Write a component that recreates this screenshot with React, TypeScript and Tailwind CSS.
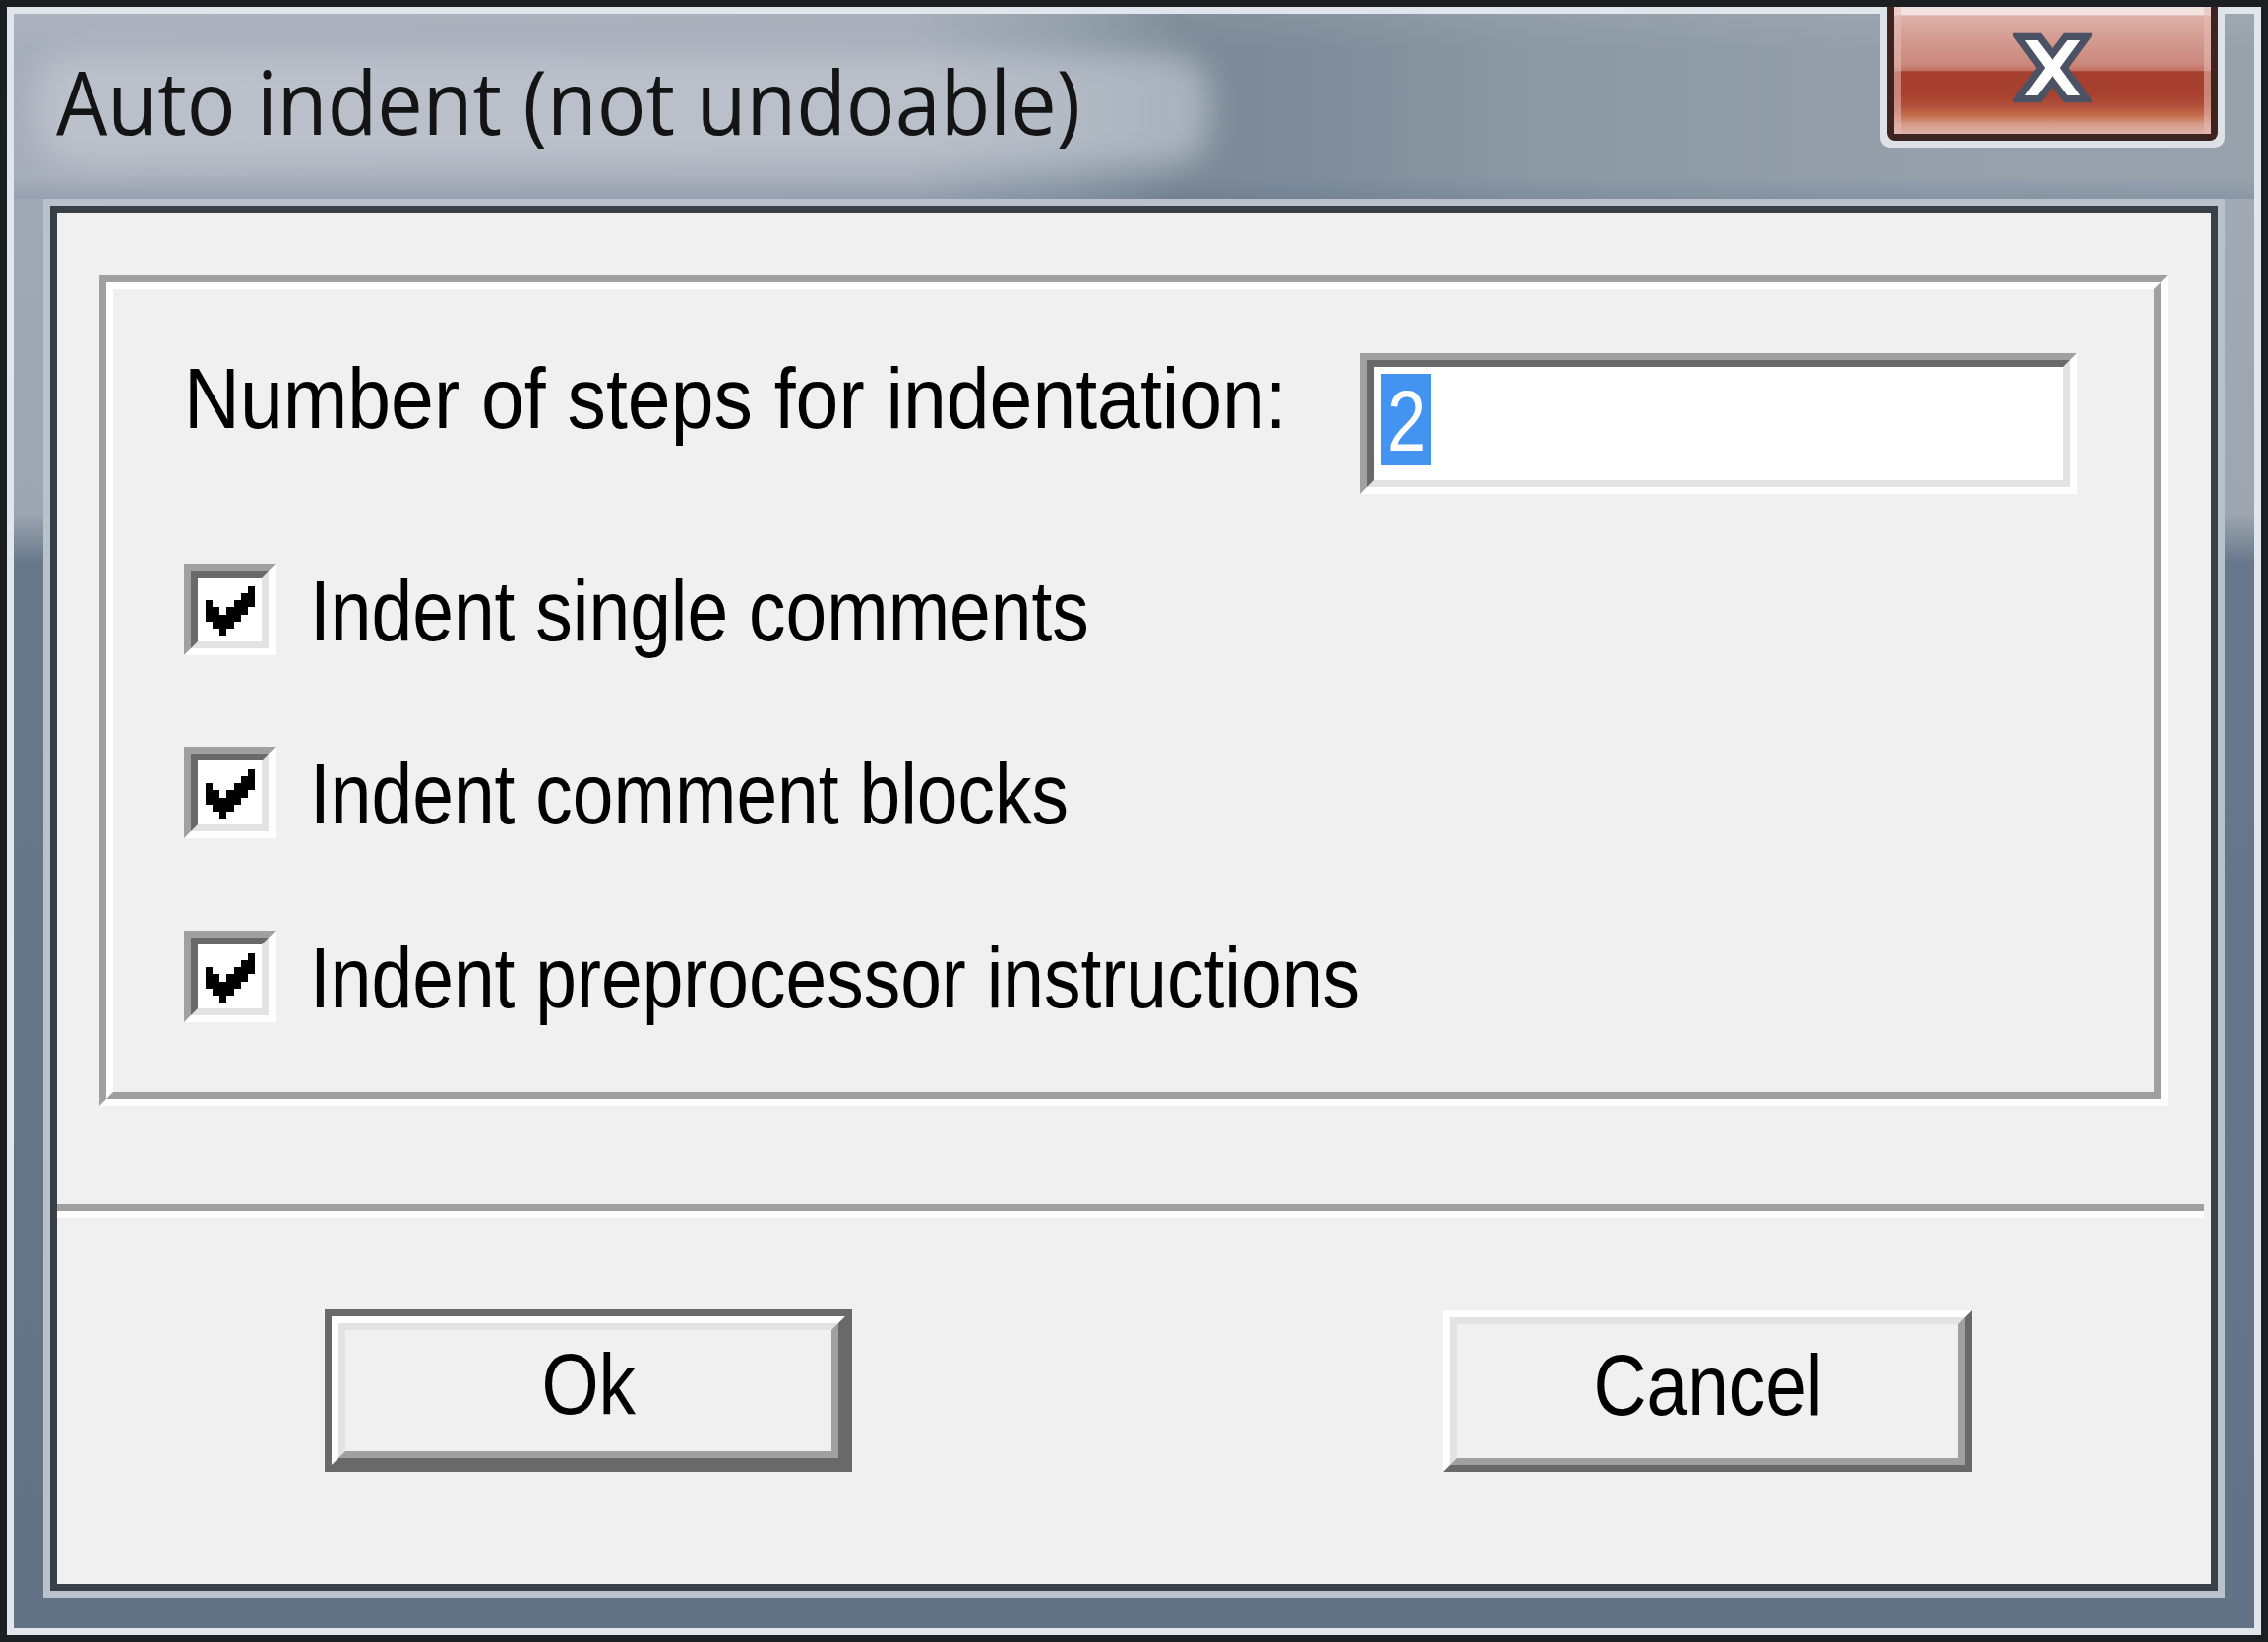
import React from "react";

const CHECK_CELLS: [number, number][] = [
  [6, 0], [5, 1], [6, 1], [0, 2], [4, 2], [5, 2], [6, 2],
  [0, 3], [1, 3], [3, 3], [4, 3], [5, 3],
  [0, 4], [1, 4], [2, 4], [3, 4], [4, 4],
  [1, 5], [2, 5], [3, 5], [2, 6],
];

function CheckMark() {
  return (
    <svg width="50" height="50" viewBox="0 0 7 7" shapeRendering="crispEdges">
      {CHECK_CELLS.map(([x, y]) => (
        <rect key={`${x}-${y}`} x={x} y={y} width="1" height="1" fill="#000" />
      ))}
    </svg>
  );
}

function Checkbox() {
  return (
    <div className="w-[93px] h-[93px] shrink-0 border-t-[7px] border-l-[7px] border-t-[#a0a0a0] border-l-[#a0a0a0] border-b-[7px] border-r-[7px] border-b-white border-r-white">
      <div className="w-full h-full border-t-[7px] border-l-[7px] border-t-[#696969] border-l-[#696969] border-b-[7px] border-r-[7px] border-b-[#e3e3e3] border-r-[#e3e3e3] bg-white flex items-center justify-center pt-[2px]">
        <CheckMark />
      </div>
    </div>
  );
}

function Label({ text, wide }: { text: string; wide?: boolean }) {
  return (
    <span
      className={
        "inline-block whitespace-nowrap origin-left font-['Liberation_Sans',Arial,sans-serif] text-[88px] leading-none text-black " +
        (wide ? "scale-x-[0.895]" : "scale-x-[0.852]")
      }
    >
      {text}
    </span>
  );
}

function CheckRow({ text, mt }: { text: string; mt: string }) {
  return (
    <div className={"flex items-start gap-[35px] " + mt}>
      <Checkbox />
      <div className="mt-[4px]">
        <Label text={text} />
      </div>
    </div>
  );
}

function CloseGlyph() {
  return (
    <svg width="80" height="72" viewBox="0 0 11 10" className="block">
      <polygon
        points="0.6,0.6 3.6,0.6 5.5,3.1 7.4,0.6 10.4,0.6 7.2,5 10.4,9.4 7.4,9.4 5.5,6.9 3.6,9.4 0.6,9.4 3.8,5"
        fill="#ffffff"
        stroke="#4a5263"
        strokeWidth="1"
        strokeLinejoin="miter"
      />
    </svg>
  );
}

function CloseButton() {
  return (
    <div className="absolute left-[1911px] top-[7px] w-[350px] h-[143px] bg-[#dde2e8] rounded-b-[10px] px-[7px] pb-[7px]">
      <div className="w-full h-full border-x-[7px] border-b-[7px] border-[#3e2420] rounded-b-[8px] overflow-hidden">
        <div className="w-full h-full flex items-center justify-center pb-[6px] bg-[linear-gradient(to_bottom,#f2e2e0_0%,#f2e2e0_6%,#ddb0a8_7%,#d49c92_25%,#cb887c_45%,#c27466_50%,#a53f2e_51%,#a7402f_68%,#b24f3a_78%,#c6704f_86%,#d49a88_92%,#dfb2a8_100%)] shadow-[inset_7px_0_0_rgba(230,190,182,0.55),inset_-7px_0_0_rgba(230,190,182,0.55)]">
          <CloseGlyph />
        </div>
      </div>
    </div>
  );
}

function Button({ text, isDefault }: { text: string; isDefault?: boolean }) {
  const inner = (
    <div className="w-full h-full border-t-[7px] border-l-[7px] border-t-white border-l-white border-b-[7px] border-r-[7px] border-b-[#696969] border-r-[#696969]">
      <div className="w-full h-full border-t-[7px] border-l-[7px] border-t-[#e3e3e3] border-l-[#e3e3e3] border-b-[7px] border-r-[7px] border-b-[#a0a0a0] border-r-[#a0a0a0] bg-[#f0f0f0] flex items-center justify-center pb-[13px]">
        <span className="inline-block whitespace-nowrap origin-center scale-x-[0.85] font-['Liberation_Sans',Arial,sans-serif] text-[88px] leading-none text-black">
          {text}
        </span>
      </div>
    </div>
  );
  if (isDefault) {
    return (
      <div className="w-[536px] h-[165px] border-[7px] border-[#696969] shrink-0">{inner}</div>
    );
  }
  return <div className="w-[537px] h-[164px] mt-[1px] shrink-0">{inner}</div>;
}

export default function App() {
  return (
    <div className="relative w-[2305px] h-[1669px] bg-[#1c1f22] p-[7px] overflow-hidden">
      <div className="h-full bg-[#e1e6ec] p-[7px]">
        <div className="h-full flex flex-col bg-[linear-gradient(to_bottom,#a4acb6_0%,#9ca5b0_31%,#67788b_34%,#627386_100%)]">
          {/* Title bar */}
          <div className="h-[188px] shrink-0 relative bg-[linear-gradient(to_right,#a6aeb9_0%,#a4acb7_40%,#909ca8_47%,#7b8996_52%,#7f8d9a_58%,#8c98a4_68%,#95a0ab_85%,#98a2ad_100%)]">
            <div className="absolute inset-0 bg-[linear-gradient(to_bottom,rgba(255,255,255,0.06)_0%,rgba(255,255,255,0)_20%,rgba(0,0,0,0)_88%,rgba(40,60,110,0.12)_100%)]" />
            <div className="relative pl-[43px] pt-[43px] h-full">
              <div className="relative inline-block">
                <div className="absolute left-[-20px] right-[-40px] top-[-4px] bottom-[-22px] bg-[#c9ced7] opacity-60 blur-[16px] rounded-[40px]" />
                <span className="relative inline-block whitespace-nowrap origin-left scale-x-[0.92] font-['Open_Sans',sans-serif] text-[90px] leading-none text-[#141414]">
                  Auto indent (not undoable)
                </span>
              </div>
            </div>
          </div>

          {/* Client area */}
          <div className="flex-1 px-[30px] pb-[31px]">
            <div className="h-full border-[7px] border-[#b9c2ca]">
              <div className="h-full border-[7px] border-[#394048] bg-[#f0f0f0] flex flex-col pt-[64px]">
                {/* Group box */}
                <div className="ml-[43px] mr-[44px] h-[844px] shrink-0 border-t-[7px] border-l-[7px] border-t-[#a0a0a0] border-l-[#a0a0a0] border-b-[7px] border-r-[7px] border-b-white border-r-white">
                  <div className="h-full border-t-[7px] border-l-[7px] border-t-white border-l-white border-b-[7px] border-r-[7px] border-b-[#a0a0a0] border-r-[#a0a0a0] pl-[72px] pt-[65px] flex flex-col">
                    <div className="flex items-start h-[143px]">
                      <div className="w-[1150px] mt-[2px] shrink-0">
                        <Label text="Number of steps for indentation:" wide />
                      </div>
                      <div className="ml-auto mr-[78px] w-[729px] h-[143px] shrink-0 border-t-[7px] border-l-[7px] border-t-[#a0a0a0] border-l-[#a0a0a0] border-b-[7px] border-r-[7px] border-b-white border-r-white">
                        <div className="w-full h-full border-t-[7px] border-l-[7px] border-t-[#696969] border-l-[#696969] border-b-[7px] border-r-[7px] border-b-[#e3e3e3] border-r-[#e3e3e3] bg-white pl-[8px] pt-[7px]">
                          <div className="w-[50px] h-[93px] bg-[#4393f0] flex justify-center pt-[4px]">
                            <span className="inline-block origin-center scale-x-[0.8] font-['Liberation_Sans',Arial,sans-serif] text-[88px] leading-none text-white">
                              2
                            </span>
                          </div>
                        </div>
                      </div>
                    </div>
                    <CheckRow text="Indent single comments" mt="mt-[71px]" />
                    <CheckRow text="Indent comment blocks" mt="mt-[93px]" />
                    <CheckRow text="Indent preprocessor instructions" mt="mt-[94px]" />
                  </div>
                </div>

                {/* Separator */}
                <div className="mt-[100px] h-[14px] shrink-0 border-t-[7px] border-t-[#a0a0a0] border-b-[7px] border-b-white mr-[7px]" />

                {/* Buttons */}
                <div className="mt-[93px] flex items-start pl-[272px] gap-[601px]">
                  <Button text="Ok" isDefault />
                  <Button text="Cancel" />
                </div>
              </div>
            </div>
          </div>
        </div>
      </div>
      <CloseButton />
    </div>
  );
}
